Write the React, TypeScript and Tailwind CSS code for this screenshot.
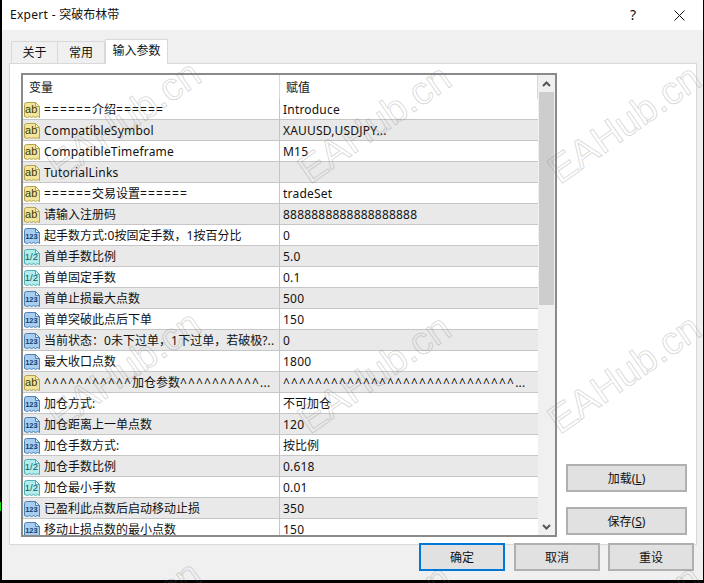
import React from "react";

const AB = "ab", N = "123", F = "1/2";
const rows: [string, string, string][] = [
  [AB, "======介绍======", "Introduce"],
  [AB, "CompatibleSymbol", "XAUUSD,USDJPY..."],
  [AB, "CompatibleTimeframe", "M15"],
  [AB, "TutorialLinks", ""],
  [AB, "======交易设置======", "tradeSet"],
  [AB, "请输入注册码", "8888888888888888888"],
  [N, "起手数方式:0按固定手数，1按百分比", "0"],
  [F, "首单手数比例", "5.0"],
  [F, "首单固定手数", "0.1"],
  [N, "首单止损最大点数", "500"],
  [N, "首单突破此点后下单", "150"],
  [N, "当前状态：0未下过单，1下过单，若破极?..", "0"],
  [N, "最大收口点数", "1800"],
  [AB, "^^^^^^^^^^^加仓参数^^^^^^^^^^...", "^^^^^^^^^^^^^^^^^^^^^^^^^^^^^..."],
  [N, "加仓方式:", "不可加仓"],
  [N, "加仓距离上一单点数", "120"],
  [N, "加仓手数方式:", "按比例"],
  [F, "加仓手数比例", "0.618"],
  [F, "加仓最小手数", "0.01"],
  [N, "已盈利此点数后启动移动止损", "350"],
  [N, "移动止损点数的最小点数", "150"],
];

function T({ s }: { s: string }) {
  const parts = s.match(/[=^]+|[\x20-\x7e]+|[^\x20-\x7e]+/g) || [];
  return (
    <>
      {parts.map((p, i) =>
        /^[=^]/.test(p) ? (
          <span key={i} className="tracking-[1.14px]">{p}</span>
        ) : /^[\x20-\x7e]/.test(p) ? (
          <span key={i} className="tracking-[0.2px]">{p}</span>
        ) : (
          <span key={i}>{p}</span>
        ),
      )}
    </>
  );
}

function TypeIcon({ kind }: { kind: string }) {
  const c =
    kind === AB
      ? { fill: "#f2e59b", stroke: "#b5a44e", text: "#3f3800", dark: "#fbf5cf" }
      : kind === N
        ? { fill: "#a9cdee", stroke: "#4a82b8", text: "#0f3e70", dark: "#dcecfa" }
        : { fill: "#b4ecec", stroke: "#4cb0b5", text: "#125a60", dark: "#e2f8f8" };
  return (
    <svg width="16" height="16" viewBox="0 0 16 16" className="shrink-0 mt-px">
      <path
        d="M0.5 2.5Q0.5 0.5 2.5 0.5H11.5L15.5 4.5V15.5L13.5 14.5L11.5 15.5L9.5 14.5L7.5 15.5L5.5 14.5L3.5 15.5L0.5 14.5Z"
        fill={c.fill}
        stroke={c.stroke}
      />
      <path d="M11.5 0.5V4.5H15.5Z" fill={c.dark} stroke={c.stroke} />
      <text
        x={kind === AB ? 7.2 : 7.4}
        y={kind === AB ? 11 : 10.7}
        textAnchor="middle"
        fontFamily="'Liberation Sans', sans-serif"
        fontSize={kind === AB ? 11 : kind === N ? 7.5 : 9.5}
        fontWeight={kind === N ? 700 : 400}
        fill={c.text}
      >
        {kind}
      </text>
    </svg>
  );
}

function Btn({ children, cls = "" }: { children: React.ReactNode; cls?: string }) {
  return (
    <div className={`flex items-center justify-center bg-[#e1e1e1] border-2 pt-px text-[12px] text-[#111] ${cls}`}>
      {children}
    </div>
  );
}

const marks: [number, number][] = [
  [124, 120], [374, 124], [624, 124],
  [124, 370], [374, 374], [624, 374],
  [124, 620], [374, 624], [624, 624],
];

export default function App() {
  return (
    <div
      className="relative w-[704px] h-[583px] overflow-hidden bg-black text-[12px] text-[#111] leading-none"
      style={{ fontFamily: "'Noto Sans','Noto Sans CJK SC',sans-serif" }}
    >
      <div className="ml-[2px] mr-[1px] h-[580px] flex flex-col bg-[#f0f0f0]">
        <div className="h-[30px] shrink-0 bg-white flex items-center pl-[8px]">
          <span className="flex-1"><span className="tracking-[0.3px]">Expert - </span>突破布林带</span>
          <span className="text-[14px] mr-[38px]">?</span>
          <svg width="11" height="11" viewBox="0 0 11 11" className="mr-[18px]">
            <path d="M0.5 0.5L10.5 10.5M10.5 0.5L0.5 10.5" stroke="#111" strokeWidth="1" fill="none" />
          </svg>
        </div>
        <div className="h-[33px] shrink-0 flex items-end pl-[9px] relative z-10">
          <div className="h-[22px] w-[47px] flex items-center justify-center bg-[#f0f0f0] border border-b-0 border-[#d9d9d9]">关于</div>
          <div className="h-[22px] w-[47px] flex items-center justify-center bg-[#f0f0f0] border border-l-0 border-b-0 border-[#d9d9d9]">常用</div>
          <div className="h-[25px] w-[63px] flex items-center justify-center bg-white border border-b-0 border-[#d9d9d9] -mb-px pb-[3px]">输入参数</div>
        </div>
        <div className="h-[482px] shrink-0 ml-[7px] mr-[6px] bg-white border border-[#d9d9d9] pl-[11px] pt-[9px] flex gap-[9px]">
          <div className="w-[536px] h-[464px] shrink-0 border-2 border-[#8a8a8a] bg-white flex overflow-hidden">
            <div className="flex-1 min-w-0 flex flex-col overflow-hidden">
              <div className="h-[24px] shrink-0 flex items-center border-r border-[#d9d9d9]">
                <div className="w-[257px] pl-[6px] pt-px border-r border-[#d9d9d9] h-full flex items-center">变量</div>
                <div className="pl-[6px] pt-px">赋值</div>
              </div>
              {rows.map((r, i) => (
                <div key={i} className={`h-[21px] shrink-0 flex border-b border-[#c6c6c6] ${i % 2 ? "bg-[#e9e9e9]" : "bg-white"}`}>
                  <div className="w-[257px] shrink-0 flex items-center gap-[4px] pl-[1px] border-r border-[#c6c6c6] whitespace-nowrap overflow-hidden">
                    <TypeIcon kind={r[0]} />
                    <span className="pt-[2px]"><T s={r[1]} /></span>
                  </div>
                  <div className="flex-1 flex items-center pl-[3px] whitespace-nowrap overflow-hidden"><span className="pt-[2px]"><T s={r[2]} /></span></div>
                </div>
              ))}
            </div>
            <div className="w-[17px] shrink-0 bg-[#f0f0f0] flex flex-col pl-px">
              <div className="h-[17px] shrink-0 flex items-center justify-center pr-px">
                <svg width="9" height="6" viewBox="0 0 9 6"><path d="M1 5L4.5 1.5L8 5" fill="none" stroke="#555" strokeWidth="2" /></svg>
              </div>
              <div className="h-[213px] w-[15px] shrink-0 bg-[#cdcdcd]" />
              <div className="flex-1" />
              <div className="h-[17px] shrink-0 flex items-center justify-center pr-px">
                <svg width="9" height="6" viewBox="0 0 9 6"><path d="M1 1L4.5 4.5L8 1" fill="none" stroke="#555" strokeWidth="2" /></svg>
              </div>
            </div>
          </div>
          <div className="flex flex-col justify-end gap-[15px] pb-[9px]">
            <Btn cls="w-[121px] h-[28px] border-[#b0b0b0]">加载(<u>L</u>)</Btn>
            <Btn cls="w-[121px] h-[28px] border-[#b0b0b0]">保存(<u>S</u>)</Btn>
          </div>
        </div>
        <div className="flex-1 flex justify-end pr-[9px] -mt-[2px] relative z-10">
          <Btn cls="w-[86px] h-[28px] border-[#0078d7]">确定</Btn>
          <Btn cls="w-[86px] h-[28px] ml-[9px] border-[#b0b0b0]">取消</Btn>
          <Btn cls="w-[86px] h-[28px] ml-[8px] border-[#b0b0b0]">重设</Btn>
        </div>
      </div>
      <div className="absolute left-0 top-[502px] w-px h-[9px] bg-[#00e000]" />
      {marks.map(([x, y], i) => (
        <div
          key={i}
          className="absolute w-[200px] text-center pointer-events-none whitespace-nowrap text-[39px] leading-none text-transparent z-20"
          style={{
            left: x - 100,
            top: y - 20,
            transform: "rotate(-35deg)",
            WebkitTextStroke: "1px rgba(120,120,120,0.28)",
            fontFamily: "'Liberation Sans',sans-serif",
          }}
        >
          EAHub.cn
        </div>
      ))}
    </div>
  );
}
